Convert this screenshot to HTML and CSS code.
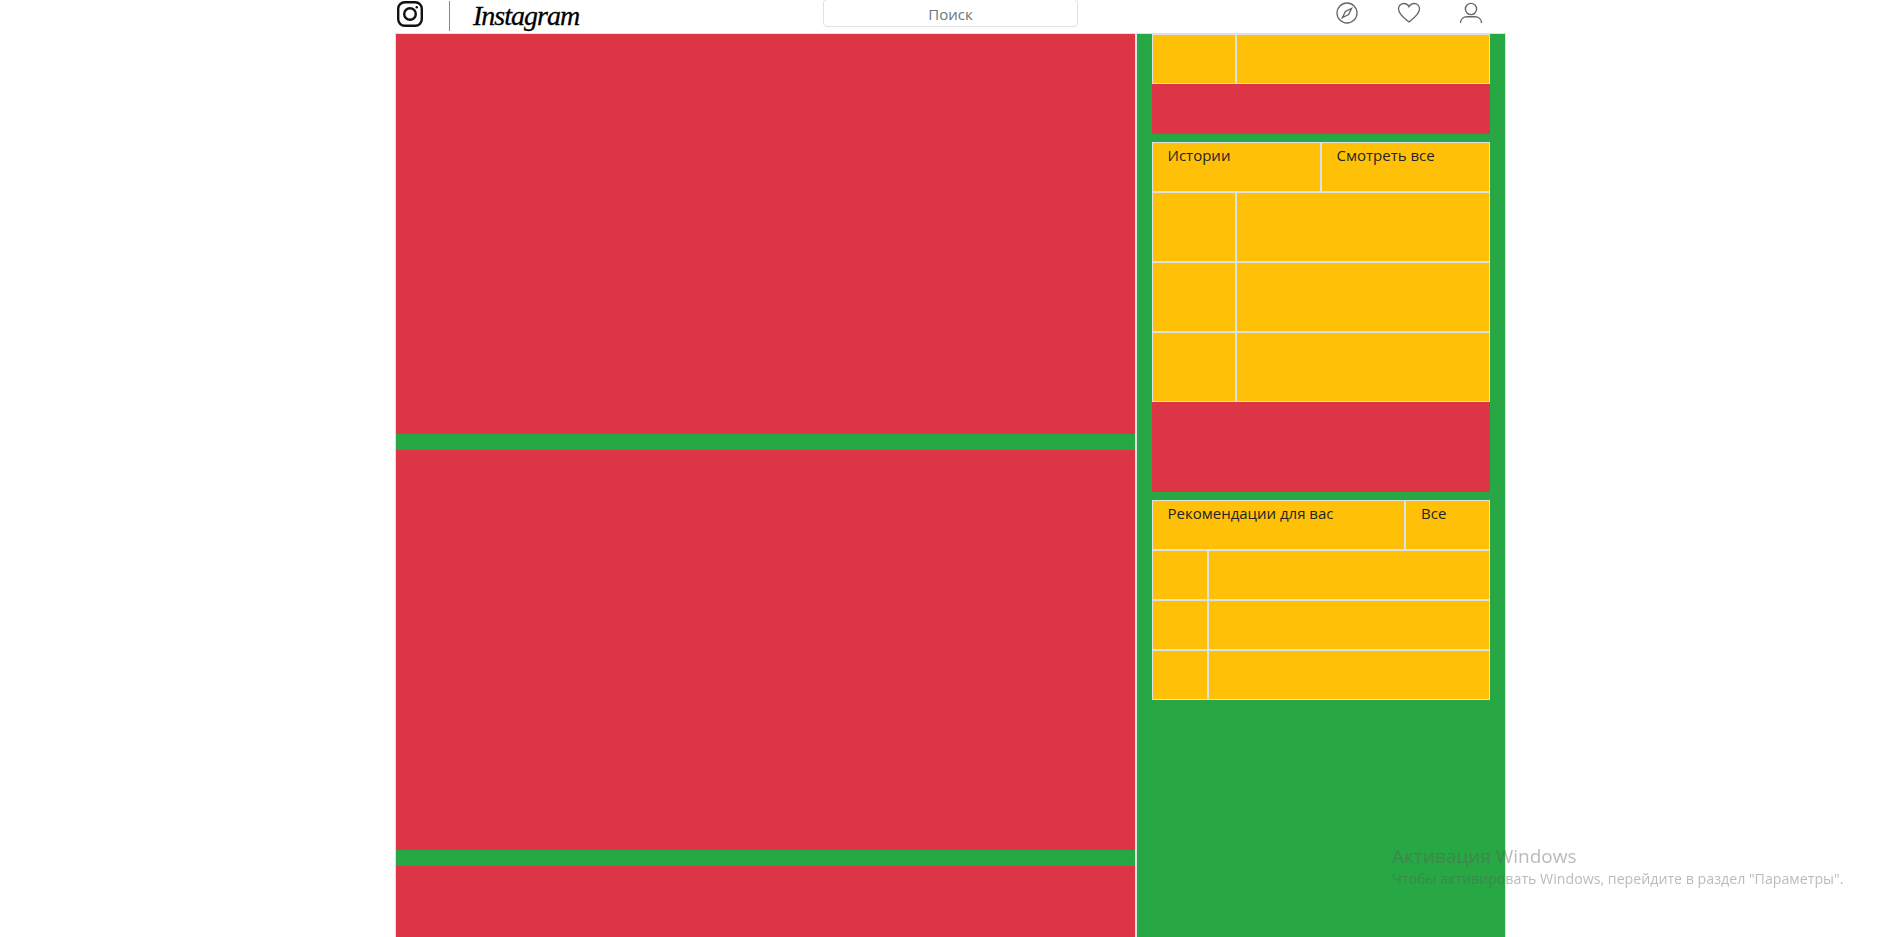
FILE: index.html
```html
<!DOCTYPE html>
<html>
	<head>
		<title>Instagram</title>
		<meta charset="UTF-8"/>
		<link rel="stylesheet" href="styles.css">
	</head>
	<body>
		<div class="page">
			<header class="topbar">
				<div class="brand">
					<svg class="brand-icon" width="26" height="26" viewBox="0 0 26 26" fill="none" stroke="#111" stroke-width="2.4">
						<rect x="1.2" y="1.2" width="23.6" height="23.6" rx="6.5"/>
						<circle cx="13" cy="13" r="5.8"/>
						<circle cx="19.8" cy="6.2" r="1.2" fill="#111" stroke="none"/>
					</svg>
					<span class="brand-line"></span>
					<span class="brand-name">Instagram</span>
				</div>
				<div class="search">Поиск</div>
				<nav class="icons">
					<span class="icon">
						<svg width="22" height="22" viewBox="0 0 22 22" fill="none" stroke="#666" stroke-width="1.3">
							<circle cx="11" cy="11" r="10"/>
							<path d="M15.6 6.4 L12.6 12.6 L6.4 15.6 L9.4 9.4 Z"/>
						</svg>
					</span>
					<span class="icon">
						<svg width="24" height="22" viewBox="0 0 24 22" fill="none" stroke="#666" stroke-width="1.3">
							<path d="M12 20 C9 17.5 1.5 12.5 1.5 7 C1.5 3.5 4 1.5 6.8 1.5 C9 1.5 11 2.8 12 4.8 C13 2.8 15 1.5 17.2 1.5 C20 1.5 22.5 3.5 22.5 7 C22.5 12.5 15 17.5 12 20 Z"/>
						</svg>
					</span>
					<span class="icon">
						<svg width="24" height="22" viewBox="0 0 24 22" fill="none" stroke="#666" stroke-width="1.4">
							<circle cx="12" cy="7" r="5.6"/>
							<path d="M1.5 21 C1.5 17 4.5 14.8 8 14.8 H16 C19.5 14.8 22.5 17 22.5 21"/>
						</svg>
					</span>
				</nav>
			</header>
			<div class="content">
				<main class="feed">
					<div class="post"></div>
					<div class="post"></div>
					<div class="post"></div>
				</main>
				<aside class="side">
					<section class="block">
						<div class="row story">
							<div class="cell col-3"></div>
							<div class="cell col-9"></div>
						</div>
						<div class="stub stub-small"></div>
					</section>
					<section class="block">
						<div class="row">
							<div class="cell col-6">Истории</div>
							<div class="cell col-6">Смотреть все</div>
						</div>
						<div class="row tall">
							<div class="cell col-3"></div>
							<div class="cell col-9"></div>
						</div>
						<div class="row tall">
							<div class="cell col-3"></div>
							<div class="cell col-9"></div>
						</div>
						<div class="row tall">
							<div class="cell col-3"></div>
							<div class="cell col-9"></div>
						</div>
						<div class="stub stub-big"></div>
					</section>
					<section class="block">
						<div class="row">
							<div class="cell col-9">Рекомендации для вас</div>
							<div class="cell col-3">Все</div>
						</div>
						<div class="row">
							<div class="cell col-2"></div>
							<div class="cell col-10"></div>
						</div>
						<div class="row">
							<div class="cell col-2"></div>
							<div class="cell col-10"></div>
						</div>
						<div class="row">
							<div class="cell col-2"></div>
							<div class="cell col-10"></div>
						</div>
					</section>
				</aside>
			</div>
		</div>
		<div class="activation">
			<div class="activation-title">Активация Windows</div>
			<div class="activation-text">Чтобы активировать Windows, перейдите в раздел "Параметры".</div>
		</div>
	</body>
</html>
```

FILE: styles.css
```css
html, body {
	height: 100%;
	margin: 0;
	overflow: hidden;
}

body {
	background: #fff;
	color: #212529;
	font-family: "Open Sans", "Noto Sans", sans-serif;
	font-size: 15px;
	line-height: 24px;
}

.page {
	height: 100vh;
	margin-left: 395px;
	overflow: hidden;
	width: 1111px;
}

/* top bar */
.topbar {
	align-items: flex-start;
	border-bottom: 1px solid #dee2e6;
	box-sizing: border-box;
	display: flex;
	height: 34px;
}

.brand {
	align-items: flex-start;
	display: flex;
	width: 428px;
}

.brand-icon {
	margin: 1px 0 0 2px;
}

.brand-line {
	background: #888;
	height: 30px;
	margin: 1px 23px 0 26px;
	width: 1px;
}

.brand-name {
	-webkit-text-stroke: 0.3px #000;
	color: #000;
	font-family: "Liberation Serif", serif;
	font-size: 28px;
	font-style: italic;
	letter-spacing: -1px;
	line-height: 32px;
}

.search {
	border: 1px solid #dee2e6;
	border-radius: 4px;
	box-sizing: border-box;
	color: #6c757d;
	height: 28px;
	margin-top: -1px;
	padding-top: 2px;
	text-align: center;
	width: 255px;
}

.icons {
	display: flex;
	flex: 1;
	justify-content: flex-end;
	padding-right: 4px;
}

.icon {
	display: flex;
	justify-content: center;
	padding-top: 2px;
	width: 62px;
}

/* main columns */
.content {
	display: flex;
	height: 100%;
}

.feed {
	background: #28a745;
	border-left: 1px solid #dee2e6;
	border-right: 1px solid #dee2e6;
	box-sizing: border-box;
	display: flex;
	flex-direction: column;
	gap: 16px;
	width: 741px;
}

.post {
	background: #dc3545;
	flex: 0 0 400px;
}

.side {
	background: #28a745;
	border-left: 1px solid #dee2e6;
	border-right: 1px solid #dee2e6;
	box-sizing: border-box;
	display: flex;
	flex-direction: column;
	gap: 8px;
	padding: 0 15.5px 0 14.5px;
	width: 370px;
}

.row {
	display: flex;
	height: 50px;
}

.tall {
	height: 70px;
}

.cell {
	background: #ffc107;
	border: 1px solid #dee2e6;
	box-sizing: border-box;
	padding: 0 15px;
}

.col-2 { width: 16.6667%; }
.col-3 { width: 25%; }
.col-6 { width: 50%; }
.col-9 { width: 75%; }
.col-10 { width: 83.34%; }

.stub {
	background: #dc3545;
}

.stub-small {
	height: 50px;
}

.stub-big {
	height: 90px;
}

/* windows watermark */
.activation {
	color: rgba(90, 90, 90, 0.42);
	left: 1392px;
	position: fixed;
	top: 843px;
}

.activation-title {
	font-size: 19px;
	line-height: 26px;
}

.activation-text {
	font-size: 14.2px;
	line-height: 20px;
}
```
